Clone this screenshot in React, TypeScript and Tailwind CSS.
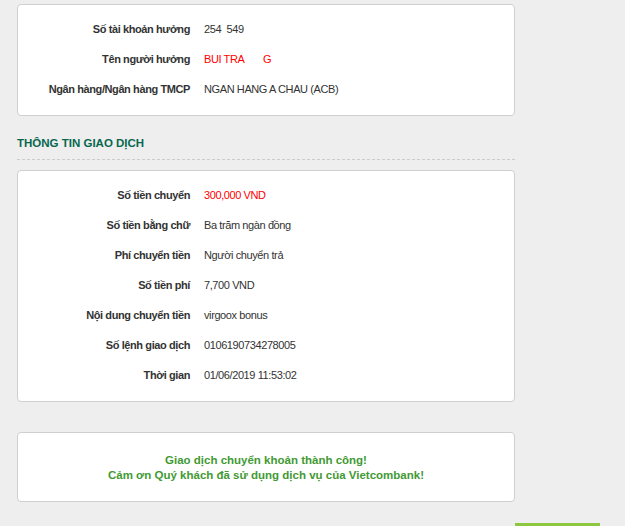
import React from 'react';

type Row = {
    label: string;
    value: string;
    red?: boolean;
};

const beneficiary: Row[] = [
    { label: 'Số tài khoản hưởng', value: '254\u2009\u2009\u2009549' },
    { label: 'Tên người hưởng', value: 'BUI TRA\u00a0\u00a0\u00a0\u00a0\u00a0\u00a0\u00a0G', red: true },
    { label: 'Ngân hàng/Ngân hàng TMCP', value: 'NGAN HANG A CHAU (ACB)' },
];

const transaction: Row[] = [
    { label: 'Số tiền chuyển', value: '300,000 VND', red: true },
    { label: 'Số tiền bằng chữ', value: 'Ba trăm ngàn đồng' },
    { label: 'Phí chuyển tiền', value: 'Người chuyển trả' },
    { label: 'Số tiền phí', value: '7,700 VND' },
    { label: 'Nội dung chuyển tiền', value: 'virgoox bonus' },
    { label: 'Số lệnh giao dịch', value: '0106190734278005' },
    { label: 'Thời gian', value: '01/06/2019 11:53:02' },
];

const InfoCard: React.FC<{ rows: Row[] }> = ({ rows }) => (
    <div className="bg-white border border-[#cfcfcf] rounded-[4px] pt-[9px] pb-[11px]">
        {rows.map((row) => (
            <div key={row.label} className="flex items-center h-[30px] text-[11px] tracking-[-0.4px]">
                <div className="w-[172px] text-right font-bold text-[#333333]">{row.label}</div>
                <div className={`ml-[14px] ${row.red ? 'text-[#ff0000]' : 'text-[#333333]'}`}>{row.value}</div>
            </div>
        ))}
    </div>
);

export default function App() {
    return (
        <div
            className="w-[625px] h-[526px] overflow-hidden bg-[#eeeeee] pl-[17px] pt-[4px]"
            style={{ fontFamily: '"Liberation Sans", Arial, sans-serif' }}
        >
            <div className="w-[498px]">
                <InfoCard rows={beneficiary} />

                <h3 className="mt-[19px] text-[11.5px] leading-[16px] font-bold text-[#07684f]">
                    THÔNG TIN GIAO DỊCH
                </h3>
                <div className="mt-[8px] border-t border-dashed border-[#cccccc]" />

                <div className="mt-[10px]">
                    <InfoCard rows={transaction} />
                </div>

                <div className="mt-[30px] bg-white border border-[#cfcfcf] rounded-[4px] pt-[20px] pb-[18px] text-center text-[11.5px] leading-[15px] font-bold text-[#3f9a34]">
                    <p>Giao dịch chuyển khoản thành công!</p>
                    <p>Cảm ơn Quý khách đã sử dụng dịch vụ của Vietcombank!</p>
                </div>
            </div>

            {/* only the top edge of the next button is visible */}
            <div className="flex mt-[21px]">
                <div className="w-[498px]" />
                <div className="w-[85px] h-[30px] bg-[#8dc63f]" />
            </div>
        </div>
    );
}
